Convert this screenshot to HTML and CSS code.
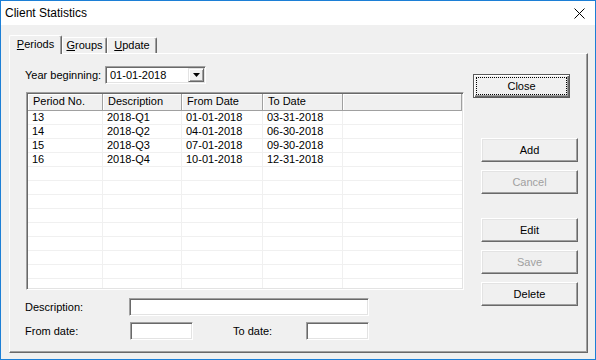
FILE: index.html
```html
<!DOCTYPE html>
<html lang="en">
<head>
    <meta charset="UTF-8">
    <title>Client Statistics</title>
    <link rel="stylesheet" href="styles.css">
</head>
<body>
    <div class="window">
        <div class="titlebar">
            <span class="title">Client Statistics</span>
            <svg class="close-x" width="11" height="11" viewBox="0 0 11 11">
                <path d="M0.5 0.5 L10.5 10.5 M10.5 0.5 L0.5 10.5" stroke="#000" stroke-width="1" fill="none"/>
            </svg>
        </div>

        <div class="client">
            <div class="tabs">
                <div class="tab active"><u>P</u>eriods</div>
                <div class="tab tab-groups"><u>G</u>roups</div>
                <div class="tab tab-update"><u>U</u>pdate</div>
            </div>

            <div class="panel">
                <div class="left">
                    <div class="year-row">
                        <span class="year-label">Year beginning:</span>
                        <div class="combo">
                            <span class="combo-text">01-01-2018</span>
                            <div class="drop">
                                <svg width="7" height="4" viewBox="0 0 7 4"><polygon points="0,0 7,0 3.5,4" fill="#000"/></svg>
                            </div>
                        </div>
                    </div>

                    <div class="listview">
                        <div class="lv-head">
                            <div class="cell">Period No.</div>
                            <div class="cell">Description</div>
                            <div class="cell">From Date</div>
                            <div class="cell">To Date</div>
                            <div class="cell"></div>
                        </div>
                        <div class="lv-body">
                            <div class="row"><div class="cell">13</div><div class="cell">2018-Q1</div><div class="cell">01-01-2018</div><div class="cell">03-31-2018</div><div class="cell"></div></div>
                            <div class="row"><div class="cell">14</div><div class="cell">2018-Q2</div><div class="cell">04-01-2018</div><div class="cell">06-30-2018</div><div class="cell"></div></div>
                            <div class="row"><div class="cell">15</div><div class="cell">2018-Q3</div><div class="cell">07-01-2018</div><div class="cell">09-30-2018</div><div class="cell"></div></div>
                            <div class="row"><div class="cell">16</div><div class="cell">2018-Q4</div><div class="cell">10-01-2018</div><div class="cell">12-31-2018</div><div class="cell"></div></div>
                            <div class="row"><div class="cell"></div><div class="cell"></div><div class="cell"></div><div class="cell"></div><div class="cell"></div></div>
                            <div class="row"><div class="cell"></div><div class="cell"></div><div class="cell"></div><div class="cell"></div><div class="cell"></div></div>
                            <div class="row"><div class="cell"></div><div class="cell"></div><div class="cell"></div><div class="cell"></div><div class="cell"></div></div>
                            <div class="row"><div class="cell"></div><div class="cell"></div><div class="cell"></div><div class="cell"></div><div class="cell"></div></div>
                            <div class="row"><div class="cell"></div><div class="cell"></div><div class="cell"></div><div class="cell"></div><div class="cell"></div></div>
                            <div class="row"><div class="cell"></div><div class="cell"></div><div class="cell"></div><div class="cell"></div><div class="cell"></div></div>
                            <div class="row"><div class="cell"></div><div class="cell"></div><div class="cell"></div><div class="cell"></div><div class="cell"></div></div>
                            <div class="row"><div class="cell"></div><div class="cell"></div><div class="cell"></div><div class="cell"></div><div class="cell"></div></div>
                            <div class="row"><div class="cell"></div><div class="cell"></div><div class="cell"></div><div class="cell"></div><div class="cell"></div></div>
                        </div>
                    </div>

                    <div class="form-row desc-row">
                        <span class="lbl lbl-desc">Description:</span>
                        <div class="field field-desc"></div>
                    </div>
                    <div class="form-row date-row">
                        <span class="lbl lbl-from">From date:</span>
                        <div class="field field-date"></div>
                        <span class="lbl lbl-to">To date:</span>
                        <div class="field field-date"></div>
                    </div>
                </div>

                <div class="right">
                    <button class="btn btn-default">Close</button>
                    <button class="btn btn-add">Add</button>
                    <button class="btn btn-gap" disabled>Cancel</button>
                    <button class="btn btn-edit">Edit</button>
                    <button class="btn btn-gap" disabled>Save</button>
                    <button class="btn btn-gap">Delete</button>
                </div>
            </div>
        </div>
    </div>
</body>
</html>
```

FILE: styles.css
```css
body {
    margin: 0;
    font-family: "Liberation Sans", Arial, sans-serif;
    font-size: 11px;
    color: #000;
}
.window {
    width: 596px;
    height: 360px;
    box-sizing: border-box;
    border: 1px solid #1c7fd6;
    display: flex;
    flex-direction: column;
    background: #f0f0f0;
}
.titlebar {
    height: 24px;
    flex: none;
    background: #fff;
    display: flex;
    align-items: center;
    justify-content: space-between;
    padding: 0 10px 0 4px;
}
.title {
    font-size: 12px;
}
.client {
    flex: 1;
    display: flex;
    flex-direction: column;
    padding: 10px 7px 6px 8px;
    min-height: 0;
}

/* tabs */
.tabs {
    display: flex;
    align-items: flex-end;
    height: 18px;
    flex: none;
    position: relative;
    z-index: 1;
}
.tab {
    box-sizing: border-box;
    height: 16px;
    line-height: 14px;
    text-align: center;
    background: #f0f0f0;
    border-top: 1px solid #fff;
    border-left: 1px solid #fff;
    border-right: 1px solid #696969;
    box-shadow: inset -1px 0 #a0a0a0;
    border-radius: 2px 2px 0 0;
}
.tab.active {
    width: 53px;
    height: 19px;
    line-height: 17px;
    margin-bottom: -1px;
}
.tab-groups {
    width: 45px;
}
.tab-update {
    width: 50px;
}

/* panel */
.panel {
    flex: 1;
    display: flex;
    border: 1px solid;
    border-color: #fff #696969 #696969 #fff;
    box-shadow: inset -1px -1px #a0a0a0;
    min-height: 0;
}
.left {
    width: 454px;
    box-sizing: border-box;
    padding-left: 15px;
}
.right {
    flex: 1;
    display: flex;
    flex-direction: column;
}

.year-row {
    margin-top: 12px;
    display: flex;
    align-items: center;
    height: 18px;
}
.year-label {
    width: 80px;
}
.combo {
    width: 101px;
    height: 18px;
    box-sizing: border-box;
    background: #fff;
    display: flex;
    align-items: center;
    justify-content: space-between;
    border: 1px solid;
    border-color: #a0a0a0 #fff #fff #a0a0a0;
    box-shadow: inset 1px 1px #696969, inset -1px -1px #e3e3e3;
    padding: 1px;
}
.combo-text {
    padding-left: 3px;
}
.drop {
    width: 16px;
    height: 14px;
    box-sizing: border-box;
    background: #f0f0f0;
    border: 1px solid;
    border-color: #e3e3e3 #696969 #696969 #e3e3e3;
    box-shadow: inset 1px 1px #fff, inset -1px -1px #a0a0a0;
    display: flex;
    align-items: center;
    justify-content: center;
}

/* list view */
.listview {
    margin-top: 8px;
    margin-left: 1px;
    width: 438px;
    height: 198px;
    box-sizing: border-box;
    background: #fff;
    border: 1px solid;
    border-color: #a0a0a0 #fff #fff #a0a0a0;
    box-shadow: inset 1px 1px #696969, inset -1px -1px #e3e3e3;
    padding: 1px;
    overflow: hidden;
}
.lv-head, .row {
    display: grid;
    grid-template-columns: 75px 79px 81px 80px 1fr;
}
.lv-head .cell {
    height: 17px;
    box-sizing: border-box;
    line-height: 15px;
    padding-left: 5px;
    background: #f0f0f0;
    border-right: 1px solid #a0a0a0;
    border-bottom: 1px solid #a0a0a0;
    box-shadow: inset 1px 1px #fff;
}
.lv-body {
    height: 177px;
    overflow: hidden;
}
.row .cell {
    height: 14px;
    box-sizing: border-box;
    line-height: 13px;
    padding-left: 4px;
    border-right: 1px solid #f0f0f0;
    border-bottom: 1px solid #f0f0f0;
}
.row .cell:last-child {
    border-right: none;
}

/* bottom fields */
.form-row {
    display: flex;
    align-items: center;
}
.desc-row {
    margin-top: 8px;
}
.date-row {
    margin-top: 6px;
}
.lbl-desc {
    width: 104px;
}
.lbl-from {
    width: 105px;
}
.lbl-to {
    margin-left: 40px;
    width: 73px;
}
.field {
    height: 18px;
    box-sizing: border-box;
    background: #fff;
    border: 1px solid;
    border-color: #a0a0a0 #fff #fff #a0a0a0;
    box-shadow: inset 1px 1px #696969, inset -1px -1px #e3e3e3;
}
.field-desc {
    width: 240px;
}
.field-date {
    width: 63px;
}

/* buttons */
.btn {
    width: 97px;
    height: 24px;
    box-sizing: border-box;
    margin: 8px 0 0 17px;
    padding: 0;
    font-family: inherit;
    font-size: 11px;
    color: #000;
    background: #f0f0f0;
    border: 1px solid;
    border-color: #fff #696969 #696969 #fff;
    box-shadow: inset -1px -1px #a0a0a0, inset 1px 1px #e3e3e3;
}
.btn:disabled {
    color: #a0a0a0;
}
.btn-default {
    margin: 20px 0 0 9px;
    border: 1px solid #5a5a5a;
    box-shadow: inset 1px 1px #fff, inset -1px -1px #696969, inset -2px -2px #a0a0a0;
    outline: 1px dotted #000;
    outline-offset: -4px;
}
.btn-add {
    margin-top: 40px;
}
.btn-edit {
    margin-top: 24px;
}
```
